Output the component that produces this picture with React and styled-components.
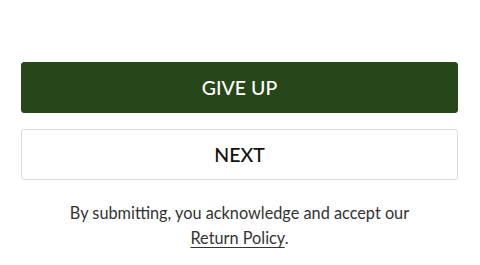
import React from 'react';
import styled, { createGlobalStyle } from 'styled-components';

const GlobalStyle = createGlobalStyle`
  body {
    margin: 0;
    background: #fff;
    font-family: "Lato", "Liberation Sans", sans-serif;
  }
`;

const Wrapper = styled.div`
  display: flex;
  flex-direction: column;
  padding: 62px 22px 0 21px;
  gap: 16px;
`;

const ActionButton = styled.button`
  display: flex;
  align-items: center;
  justify-content: center;
  height: 51px;
  width: 100%;
  border-radius: 3px;
  border: 1px solid ${(p) => (p.primary ? '#264717' : '#dcdcdc')};
  background: ${(p) => (p.primary ? '#264717' : '#fff')};
  color: ${(p) => (p.primary ? '#fff' : '#111')};
  font-family: "Lato", "Liberation Sans", sans-serif;
  font-size: 19.5px;
  font-weight: 500;
  cursor: pointer;
`;

const Note = styled.p`
  margin: 4px 0 0;
  text-align: center;
  color: #333;
  font-size: 16.3px;
  line-height: 25px;
`;

const PolicyLink = styled.a`
  color: #333;
  text-decoration: underline;
  text-underline-offset: 3px;
`;

const App = () => (
  <>
    <GlobalStyle />
    <Wrapper>
      <ActionButton primary type="button">GIVE UP</ActionButton>
      <ActionButton type="button">NEXT</ActionButton>
      <Note>
        By submitting, you acknowledge and accept our
        <br />
        <PolicyLink href="#">Return Policy</PolicyLink>.
      </Note>
    </Wrapper>
  </>
);

export default App;
